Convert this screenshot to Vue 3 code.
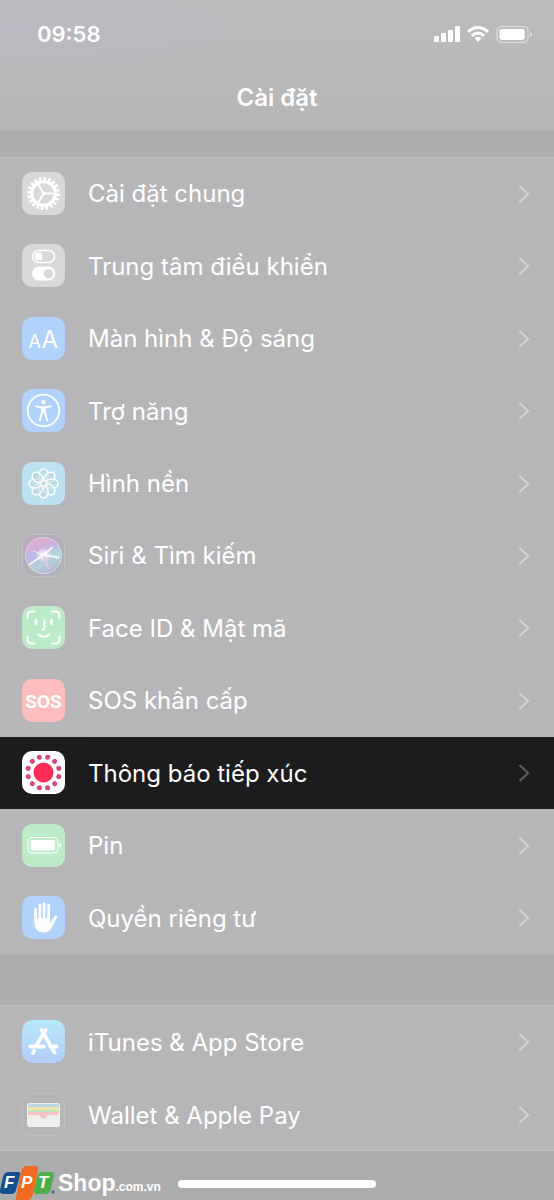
<script setup>
import { ref } from 'vue'

const selected = ref('exposure')

const groups = [
  {
    name: 'system',
    items: [
      { id: 'general', label: 'Cài đặt chung' },
      { id: 'control', label: 'Trung tâm điều khiển' },
      { id: 'display', label: 'Màn hình & Độ sáng' },
      { id: 'access', label: 'Trợ năng' },
      { id: 'wallpaper', label: 'Hình nền' },
      { id: 'siri', label: 'Siri & Tìm kiếm' },
      { id: 'faceid', label: 'Face ID & Mật mã' },
      { id: 'sos', label: 'SOS khẩn cấp' },
      { id: 'exposure', label: 'Thông báo tiếp xúc' },
      { id: 'battery', label: 'Pin' },
      { id: 'privacy', label: 'Quyền riêng tư' }
    ]
  },
  {
    name: 'store',
    items: [
      { id: 'appstore', label: 'iTunes & App Store' },
      { id: 'wallet', label: 'Wallet & Apple Pay' }
    ]
  }
]

// 12 small dots in a ring, starting half a step off the top
const dots = Array.from({ length: 12 }, (_, i) => 15 + i * 30)
const petals = Array.from({ length: 8 }, (_, i) => i * 45)
</script>

<template>
  <div class="phone">
    <header class="top">
      <div class="status">
        <span class="time">09:58</span>
        <div class="status-icons">
          <svg width="26" height="17" viewBox="0 0 26 17" fill="#fff">
            <rect x="0" y="10" width="5" height="6" rx="1" />
            <rect x="7" y="7" width="5" height="9" rx="1" />
            <rect x="14" y="4" width="5" height="12" rx="1" />
            <rect x="21" y="0" width="5" height="16" rx="1" />
          </svg>
          <svg width="22" height="17" viewBox="0 0 22 17" fill="none" stroke="#fff" stroke-width="3">
            <path d="M1 5.8Q11-2.8 21 5.8" />
            <path d="M4.8 9.8Q11 4.4 17.2 9.8" />
            <path d="M7.6 12.2Q11 9.4 14.4 12.2L11 16Z" fill="#fff" stroke="none" />
          </svg>
          <svg width="37" height="17" viewBox="0 0 37 17">
            <rect x="1" y=".7" width="31" height="15.6" rx="4.5" fill="none" stroke="#dcdcdd" stroke-width="1.3" />
            <rect x="3.4" y="3" width="25.4" height="11" rx="2.4" fill="#fff" />
            <path d="M34 6q2 .8 2 2.5T34 11Z" fill="#dcdcdd" />
          </svg>
        </div>
      </div>
      <h1 class="title">Cài đặt</h1>
    </header>

    <main class="content">
      <ul v-for="group in groups" :key="group.name" class="group" :class="group.name">
        <li v-for="item in group.items" :key="item.id" class="item" :class="{ active: item.id === selected }">
          <a class="row" href="#" @click.prevent="selected = item.id">
            <svg class="icon" :class="item.id" viewBox="0 0 43 43" aria-hidden="true">
              <g v-if="item.id === 'general'" fill="none" stroke="#fff">
                <circle cx="21.5" cy="21.5" r="11.8" stroke-width="3.2" />
                <circle cx="21.5" cy="21.5" r="14.4" stroke-width="4.2" pathLength="40" stroke-dasharray="1.1 .9" />
                <path d="M21.5 21.5H33M21.5 21.5l-5.8-10M21.5 21.5l-5.8 10" stroke-width="2" />
                <circle cx="21.5" cy="21.5" r="2" fill="#fff" stroke="none" />
              </g>
              <g v-else-if="item.id === 'control'">
                <rect x="10.6" y="6.6" width="22" height="12" rx="6" fill="none" stroke="#fff" stroke-width="1.5" />
                <circle cx="16.6" cy="12.6" r="4" fill="#fff" />
                <rect x="10" y="22.6" width="23.4" height="14" rx="7" fill="#fff" />
                <circle cx="26.4" cy="29.6" r="4.7" fill="#d9d9db" />
              </g>
              <g v-else-if="item.id === 'display'" class="letters">
                <text x="6.5" y="30.5" font-size="18">A</text>
                <text x="19.5" y="30.5" font-size="24">A</text>
              </g>
              <g v-else-if="item.id === 'access'">
                <circle cx="21.5" cy="21.5" r="15.8" fill="none" stroke="#fff" stroke-width="1.8" />
                <circle cx="21.5" cy="13.3" r="2.3" fill="#fff" />
                <path d="M14 17.4l6 1.1v4.8l-2.2 8M29 17.4l-6 1.1v4.8l2.2 8" fill="none" stroke="#fff" stroke-width="1.8" stroke-linecap="round" />
                <path d="M19.3 17.6h4.4v5.2l.9 3h-1.6l-1.5-2.6-1.5 2.6h-1.6l.9-3Z" fill="#fff" />
              </g>
              <g v-else-if="item.id === 'wallpaper'" fill="#b5d3de" fill-opacity=".5" stroke="#fff" stroke-width="1.5">
                <ellipse v-for="deg in petals" :key="deg" cx="21.5" cy="13" rx="4.6" ry="6" :transform="`rotate(${deg} 21.5 21.5)`" />
                <circle cx="21.5" cy="21.5" r="3" stroke-width="1" />
              </g>
              <g v-else-if="item.id === 'siri'">
                <defs>
                  <linearGradient id="siri-bg" x1="0" y1="0" x2="1" y2="1">
                    <stop offset="0" stop-color="#bba9bd" />
                    <stop offset=".55" stop-color="#b2afb8" />
                    <stop offset="1" stop-color="#aeb5bc" />
                  </linearGradient>
                  <linearGradient id="siri-orb" x1=".3" y1="0" x2=".75" y2="1">
                    <stop offset="0" stop-color="#e3aacb" />
                    <stop offset=".4" stop-color="#c7b5df" />
                    <stop offset=".7" stop-color="#b4d1d7" />
                    <stop offset="1" stop-color="#b3afd1" />
                  </linearGradient>
                  <radialGradient id="siri-glow">
                    <stop offset="0" stop-color="#fff" />
                    <stop offset="1" stop-color="#fff" stop-opacity="0" />
                  </radialGradient>
                </defs>
                <rect x=".5" y=".5" width="42" height="42" rx="9.5" fill="url(#siri-bg)" stroke="#c4c1c7" stroke-width=".8" />
                <circle cx="21.5" cy="21.5" r="18" fill="url(#siri-orb)" stroke="#dcd7e1" stroke-width="1" />
                <path d="M22 21L37 12q4 10-1 14Z" fill="#aedfdc" opacity=".6" />
                <path d="M22 21L5 15q-2 9 3 16Z" fill="#b8bcea" opacity=".6" />
                <circle cx="21.5" cy="21" r="8" fill="url(#siri-glow)" />
                <path d="M7.5 30.5L21.5 21M21.500 21L30 13.500M21.5 21l15 2.500" stroke="#fff" stroke-width="1.8" stroke-linecap="round" opacity=".85" />
                <path d="M11 17l10.500 4" stroke="#fff" stroke-width="1.200" stroke-linecap="round" opacity=".6" />
                <path d="M22 22l4.8 13.5" stroke="#eec3e4" stroke-width="1.8" />
              </g>
              <g v-else-if="item.id === 'faceid'" fill="none" stroke="#fff" stroke-width="2" stroke-linecap="round">
                <path d="M5.6 12.5V9.6q0-4 4-4h3.2M30.2 5.6h3.2q4 0 4 4v2.9M37.4 30.5v2.9q0 4-4 4h-3.2M12.8 37.4H9.6q-4 0-4-4v-2.9" />
                <path d="M14 14.5v2.8M29.4 14.5v2.8" stroke-width="3.2" />
                <path d="M22.5 14.3v7.4q0 2-2.2 2M16 28.4q5.8 4.6 11.4 0" />
              </g>
              <text v-else-if="item.id === 'sos'" class="sos-text" x="21.5" y="28.5" text-anchor="middle">SOS</text>
              <g v-else-if="item.id === 'exposure'" fill="#d8477c">
                <circle cx="21.5" cy="21.5" r="10" fill="#fa2d59" />
                <circle v-for="deg in dots" :key="deg" cx="21.5" cy="5.7" r="2.5" :transform="`rotate(${deg} 21.5 21.5)`" />
              </g>
              <g v-else-if="item.id === 'battery'">
                <rect x="6" y="13.5" width="30" height="15.5" rx="4" fill="none" stroke="#fff" stroke-width="1" />
                <rect x="8.6" y="16" width="24.6" height="10.4" rx="1.8" fill="#fff" />
                <path d="M37.4 18.8q1.8.8 1.8 2.5t-1.8 2.5Z" fill="#fff" />
              </g>
              <g v-else-if="item.id === 'privacy'" fill="none" stroke="#fff" stroke-linecap="round">
                <path d="M13.4 13.4l.4 14M17.8 9l.2 17M22.2 7.8V26M26.8 9.4L26.4 26" stroke-width="2.8" />
                <path d="M33.8 20.8L28.6 29" stroke-width="2.6" />
                <path d="M12.4 22.5h15.4v3.2q1.2.4 2-1l3-3.8q1.5-.8 2.2.2L29.5 32q-2.4 4.5-8 4.5-6.8 0-8.6-5.4Z" fill="#fff" stroke="none" />
              </g>
              <g v-else-if="item.id === 'appstore'">
                <defs>
                  <linearGradient id="store-bg" x1="0" y1="0" x2="0" y2="1">
                    <stop offset="0" stop-color="#b6e9fb" />
                    <stop offset="1" stop-color="#b5cdfa" />
                  </linearGradient>
                </defs>
                <rect width="43" height="43" rx="10" fill="url(#store-bg)" />
                <path d="M8.4 26.5h13.4M28.4 26.5h6.2M23.6 10L14 26M12.2 30.8l-1.2 2M19.4 10L32.6 32.6" fill="none" stroke="#fff" stroke-width="3.8" stroke-linecap="round" />
              </g>
              <g v-else-if="item.id === 'wallet'">
                <rect x=".5" y=".5" width="42" height="42" rx="9.5" fill="#b5b5b6" stroke="#bfbfc0" />
                <rect x="5" y="10" width="33" height="24" rx="2.5" fill="#efefed" />
                <path d="M6 14v-1.5q0-1.5 1.5-1.5h28q1.5 0 1.5 1.5V14Z" fill="#b9d8e6" />
                <path d="M6 14h31v3H6Z" fill="#f0e5b1" />
                <path d="M6 17h31v2.5H6Z" fill="#c2e3be" />
                <path d="M6 19h31v3H27q-1 0-1.6 1-1.4 2.6-3.9 2.6T17.6 23q-.6-1-1.6-1H6Z" fill="#f1c5c2" />
              </g>
            </svg>
            <span class="label">
              {{ item.label }}
              <svg class="chevron" width="12" height="20" viewBox="0 0 12 20" aria-hidden="true">
                <path d="M1.5 2L10 10l-8.5 8" fill="none" stroke="currentColor" stroke-width="2.2" />
              </svg>
            </span>
          </a>
        </li>
      </ul>
    </main>

    <footer class="bottom">
      <div class="brand">
        <svg class="fpt" width="56" height="36" viewBox="0 0 56 36">
          <path d="M9 7h9q3 0 2 3l-4 15q-1 4-5 4H3q-4 0-3-4L3 12q1-5 6-5Z" fill="#164f91" />
          <path d="M43 7h8q3 0 3 3l-3 13q-1 6-6 6h-8q-4 0-3-4l3-13q1-5 6-5Z" fill="#50ae48" />
          <path d="M27 1h8q4 0 3 4l-5 24q-2 7-8 7h-6q-4 0-3-4l5-24q1-7 6-7Z" fill="#ef6b22" />
          <circle cx="53" cy="27" r="1.8" fill="#4d6fa5" />
          <g class="fpt-text">
            <text x="4" y="23">F</text>
            <text x="21" y="23">P</text>
            <text x="38" y="23">T</text>
          </g>
        </svg>
        <span class="shop">Shop<small>.com.vn</small></span>
      </div>
      <div class="home-bar"></div>
    </footer>
  </div>
</template>

<style>
body {
  margin: 0;
  background: #adadad;
}
</style>

<style scoped>
.phone {
  min-height: 100vh;
  display: flex;
  flex-direction: column;
  background: #adadad;
  color: #fff;
  font-family: Inter, "Liberation Sans", sans-serif;
}
.top {
  height: 131px;
  background: radial-gradient(ellipse at 6% 20%, #bab9c2, transparent 40%), linear-gradient(#bcbcbc, #b6b6b7);
  border-bottom: 1px solid #b2b2b3;
  box-sizing: border-box;
}
.status {
  display: flex;
  justify-content: space-between;
  align-items: center;
  padding: 20px 21px 0 37px;
  height: 28px;
}
.time {
  font-size: 22px;
  font-weight: 600;
}
.status-icons {
  display: flex;
  gap: 7px;
}
.title {
  margin: 34px 0 0;
  font-size: 24px;
  line-height: 32px;
  font-weight: 600;
  text-align: center;
}
.content {
  display: flex;
  flex-direction: column;
  gap: 51px;
  padding-top: 26px;
}
.group {
  list-style: none;
  margin: 0;
  padding: 0;
  display: grid;
  grid-auto-rows: 1fr;
  background: #b6b6b8;
  box-shadow: inset 0 1px #bcbcbd, inset 0 -1px #bcbcbd;
}
.system {
  min-height: 797px;
}
.store {
  min-height: 146px;
}
.row {
  height: 100%;
  display: flex;
  align-items: center;
  gap: 23px;
  padding-left: 22px;
  color: #fff;
  text-decoration: none;
}
.icon {
  width: 43px;
  height: 43px;
  flex: none;
  border-radius: 10px;
}
.general,
.control {
  background: #d9d9db;
}
.display,
.access,
.privacy {
  background: #b1d3fb;
}
.wallpaper {
  background: #bce2f0;
}
.faceid,
.battery {
  background: #bcecc7;
}
.sos {
  background: #fcbdbc;
}
.exposure {
  background: #fff;
}
.letters {
  fill: #fff;
  font-family: Inter, sans-serif;
}
.sos-text {
  fill: #fff;
  font-family: Roboto, sans-serif;
  font-size: 19px;
  font-weight: 700;
}
.label {
  flex: 1;
  align-self: stretch;
  display: flex;
  align-items: center;
  justify-content: space-between;
  padding: 2px 24px 0 0;
  font-size: 24px;
  border-bottom: 1px solid #bbbbbd;
}
.item:last-child .label {
  border-bottom-color: transparent;
}
.chevron {
  color: #d3d3d5;
}
.active {
  background: #1c1c1e;
}
.active .label {
  border-bottom-color: transparent;
}
.active .chevron {
  color: #5b5b5e;
}
.bottom {
  flex: 1;
  display: grid;
  grid-template-columns: 1fr 198px 1fr;
  padding-top: 14px;
}
.brand {
  display: flex;
  align-items: flex-start;
  gap: 2px;
}
.shop {
  font-family: "Liberation Sans", sans-serif;
  font-size: 23px;
  line-height: 36px;
  font-weight: 700;
}
.shop small {
  font-size: 12px;
}
.fpt {
  flex: none;
}
.fpt-text {
  fill: #fff;
  font-family: "Liberation Sans", sans-serif;
  font-size: 17px;
  font-style: italic;
  font-weight: 700;
}
.home-bar {
  height: 8px;
  margin-top: 15px;
  border-radius: 4px;
  background: #fff;
}
</style>
